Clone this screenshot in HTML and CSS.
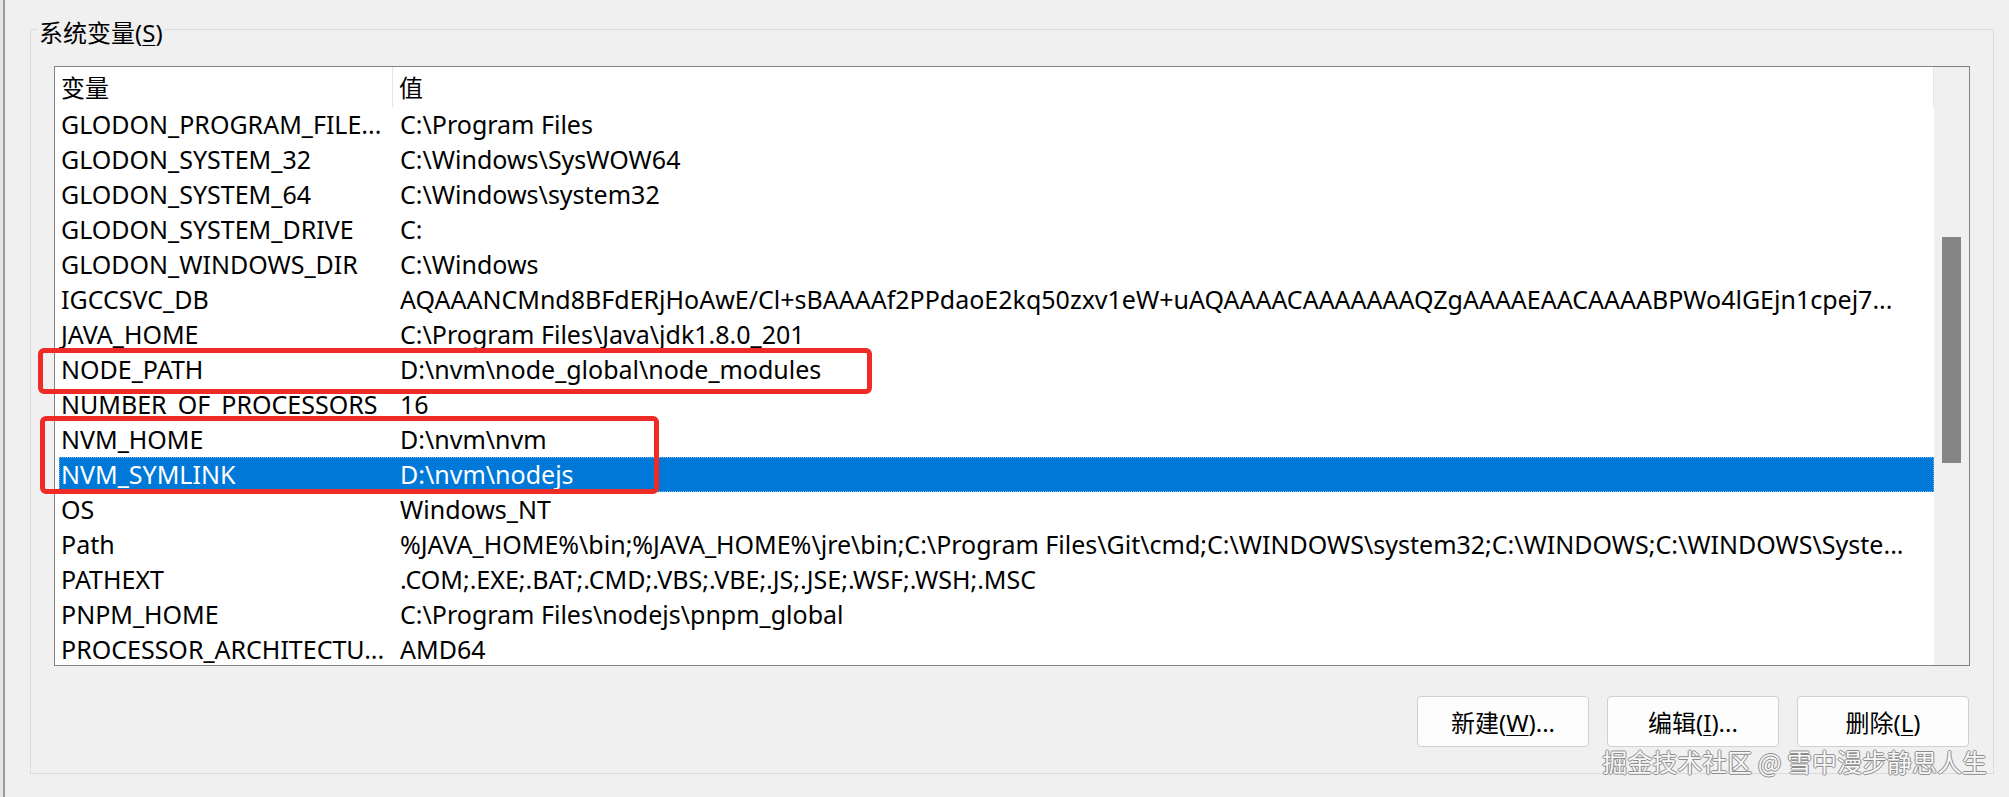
FILE: index.html
```html
<!DOCTYPE html>
<html lang="zh-CN">
<head>
  <meta charset="UTF-8">
  <title>系统变量</title>
  <link rel="stylesheet" href="styles.css">
</head>
<body>
  <div class="group">
    <div class="group-title">系统变量(<u>S</u>)</div>

    <div class="list">
      <div class="list-body">
        <div class="row head">
          <div class="cell name">变量</div>
          <div class="cell value">值</div>
        </div>
        <div class="row"><div class="cell name">GLODON_PROGRAM_FILE...</div><div class="cell value">C:\Program Files</div></div>
        <div class="row"><div class="cell name">GLODON_SYSTEM_32</div><div class="cell value">C:\Windows\SysWOW64</div></div>
        <div class="row"><div class="cell name">GLODON_SYSTEM_64</div><div class="cell value">C:\Windows\system32</div></div>
        <div class="row"><div class="cell name">GLODON_SYSTEM_DRIVE</div><div class="cell value">C:</div></div>
        <div class="row"><div class="cell name">GLODON_WINDOWS_DIR</div><div class="cell value">C:\Windows</div></div>
        <div class="row"><div class="cell name">IGCCSVC_DB</div><div class="cell value">AQAAANCMnd8BFdERjHoAwE/Cl+sBAAAAf2PPdaoE2kq50zxv1eW+uAQAAAACAAAAAAAQZgAAAAEAACAAAABPWo4lGEjn1cpej7...</div></div>
        <div class="row"><div class="cell name">JAVA_HOME</div><div class="cell value">C:\Program Files\Java\jdk1.8.0_201</div></div>
        <div class="row"><div class="cell name">NODE_PATH</div><div class="cell value">D:\nvm\node_global\node_modules</div></div>
        <div class="row"><div class="cell name">NUMBER_OF_PROCESSORS</div><div class="cell value">16</div></div>
        <div class="row"><div class="cell name">NVM_HOME</div><div class="cell value">D:\nvm\nvm</div></div>
        <div class="row selected"><div class="cell name">NVM_SYMLINK</div><div class="cell value">D:\nvm\nodejs</div></div>
        <div class="row"><div class="cell name">OS</div><div class="cell value">Windows_NT</div></div>
        <div class="row"><div class="cell name">Path</div><div class="cell value">%JAVA_HOME%\bin;%JAVA_HOME%\jre\bin;C:\Program Files\Git\cmd;C:\WINDOWS\system32;C:\WINDOWS;C:\WINDOWS\Syste...</div></div>
        <div class="row"><div class="cell name">PATHEXT</div><div class="cell value">.COM;.EXE;.BAT;.CMD;.VBS;.VBE;.JS;.JSE;.WSF;.WSH;.MSC</div></div>
        <div class="row"><div class="cell name">PNPM_HOME</div><div class="cell value">C:\Program Files\nodejs\pnpm_global</div></div>
        <div class="row"><div class="cell name">PROCESSOR_ARCHITECTU...</div><div class="cell value">AMD64</div></div>
      </div>
      <div class="scrollbar">
        <div class="thumb"></div>
      </div>
    </div>

    <div class="buttons">
      <button class="btn">新建(<u>W</u>)...</button>
      <button class="btn">编辑(<u>I</u>)...</button>
      <button class="btn">删除(<u>L</u>)</button>
    </div>
  </div>

  <!-- annotations drawn over the screenshot -->
  <div class="mark mark-node"></div>
  <div class="mark mark-nvm"></div>
  <div class="watermark">掘金技术社区 @ 雪中漫步静思人生</div>
</body>
</html>
```

FILE: styles.css
```css
html, body {
  margin: 0;
  padding: 0;
}
body {
  width: 2009px;
  height: 797px;
  overflow: hidden;
  position: relative;
  font-family: "Noto Sans", "Noto Sans CJK SC", sans-serif;
  font-size: 24px;
  color: #000;
  background: linear-gradient(to right, #e6e6e6 0 3px, #9a9a9a 3px 5px, #f0f0f0 5px);
  padding-top: 29px;
  box-sizing: border-box;
}

/* group box */
.group {
  margin-left: 30px;
  width: 1964px;
  height: 745px;
  box-sizing: border-box;
  border: 1px solid #dcdcdc;
}
.group-title {
  width: fit-content;
  margin: -12px 0 0 7px;
  padding: 0 1px;
  height: 30px;
  line-height: 30px;
  background: #f0f0f0;
}
.group-title u,
.btn u {
  text-underline-offset: 3px;
  text-decoration-thickness: 1px;
}

/* list view */
.list {
  display: flex;
  margin: 18px 0 0 23px;
  width: 1916px;
  height: 600px;
  box-sizing: border-box;
  border: 1px solid #828282;
  background: #fff;
}
.list-body {
  flex: 1;
  padding-left: 4px;
  overflow: hidden;
}
.row {
  display: flex;
  height: 35px;
  line-height: 35px;
  font-size: 25px;
  white-space: nowrap;
}
.row.head {
  height: 40px;
  line-height: 42px;
  font-size: 24px;
}
.cell {
  overflow: hidden;
}
.cell.name {
  width: 334px;
  flex: none;
  box-sizing: border-box;
  padding: 0 7px 0 2px;
}
.cell.value {
  flex: 1;
  padding: 0 8px 0 7px;
}
.head .cell.name {
  border-right: 1px solid #e5e5e5;
}
.head .cell.value {
  padding-left: 6px;
  border-right: 1px solid #e5e5e5;
}
.row.selected {
  background: #0078d7;
  color: #fff;
  outline: 1px dotted #7fb6e6;
  outline-offset: -1px;
}

.scrollbar {
  width: 35px;
  flex: none;
  background: #f0f0f0;
  padding: 170px 0 0 8px;
  box-sizing: border-box;
}
.thumb {
  width: 19px;
  height: 226px;
  background: #858585;
}

/* buttons */
.buttons {
  display: flex;
  justify-content: flex-end;
  gap: 18px;
  margin: 30px 24px 0 0;
}
.btn {
  width: 172px;
  height: 51px;
  font-family: inherit;
  font-size: 24px;
  color: #000;
  background: #fdfdfd;
  border: 1px solid #d0d0d0;
  border-radius: 4px;
  padding: 0;
}

/* red highlight boxes */
.mark {
  position: absolute;
  border: 5px solid #ee2b26;
  border-radius: 6px;
  box-sizing: border-box;
}
.mark-node {
  left: 38px;
  top: 348px;
  width: 834px;
  height: 46px;
}
.mark-nvm {
  left: 40px;
  top: 416px;
  width: 619px;
  height: 78px;
}

.watermark {
  position: absolute;
  right: 22px;
  top: 745px;
  font-family: "Noto Sans CJK SC", sans-serif;
  font-size: 25px;
  line-height: 32px;
  color: #f7f7f7;
  text-shadow: -1px 0 #8c8c8c, 1px 0 #8c8c8c, 0 -1px #8c8c8c, 0 1px #8c8c8c;
  white-space: nowrap;
}
```
